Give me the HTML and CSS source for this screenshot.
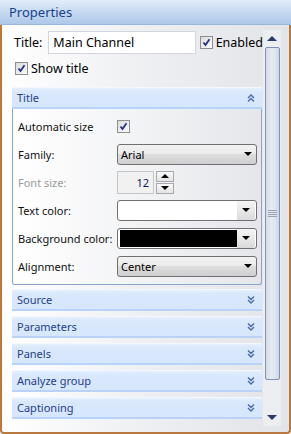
FILE: index.html
```html
<!DOCTYPE html>
<html>
<head>
<meta charset="utf-8">
<link rel="stylesheet" href="styles.css">
</head>
<body>
<div class="window">
  <div class="header">Properties</div>
  <div class="frame">
    <div class="main">
      <div class="row-title">
        <span class="lbl-big">Title:</span>
        <div class="textbox">Main Channel</div>
        <span class="chk checked"><svg viewBox="0 0 9 9" width="9" height="9"><path d="M1.5 4.5 L3.5 7 L7.5 1.2" fill="none" stroke="#23318c" stroke-width="1.8"/></svg></span>
        <span class="lbl-big">Enabled</span>
      </div>
      <div class="row-show">
        <span class="chk checked"><svg viewBox="0 0 9 9" width="9" height="9"><path d="M1.5 4.5 L3.5 7 L7.5 1.2" fill="none" stroke="#23318c" stroke-width="1.8"/></svg></span>
        <span class="lbl-big">Show title</span>
      </div>

      <div class="sect first">
        <span>Title</span>
        <svg class="chev" viewBox="0 0 8 8" width="8" height="8"><path d="M1 4 L4 1 L7 4 M1 7.5 L4 4.5 L7 7.5" fill="none" stroke="#4a6aa5" stroke-width="1.4"/></svg>
      </div>
      <div class="panel">
        <div class="prow">
          <span class="plbl">Automatic size</span>
          <span class="chk checked small"><svg viewBox="0 0 9 9" width="9" height="9"><path d="M1.5 4.5 L3.5 7 L7.5 1.2" fill="none" stroke="#23318c" stroke-width="1.8"/></svg></span>
        </div>
        <div class="prow">
          <span class="plbl">Family:</span>
          <div class="combo"><span class="ctext">Arial</span><span class="arrow"></span></div>
        </div>
        <div class="prow">
          <span class="plbl disabled">Font size:</span>
          <div class="spin">
            <div class="spinval">12</div>
            <div class="spinbtns">
              <div class="sbtn"><span class="tri-up"></span></div>
              <div class="sbtn"><span class="tri-dn"></span></div>
            </div>
          </div>
        </div>
        <div class="prow">
          <span class="plbl">Text color:</span>
          <div class="combo color"><span class="swatch white"></span><span class="cbtn"><span class="arrow"></span></span></div>
        </div>
        <div class="prow">
          <span class="plbl">Background color:</span>
          <div class="combo color"><span class="swatch black"></span><span class="cbtn"><span class="arrow"></span></span></div>
        </div>
        <div class="prow">
          <span class="plbl">Alignment:</span>
          <div class="combo"><span class="ctext">Center</span><span class="arrow"></span></div>
        </div>
      </div>

      <div class="sect gap4">
        <span>Source</span>
        <svg class="chev" viewBox="0 0 8 8" width="8" height="8"><path d="M1 0.5 L4 3.5 L7 0.5 M1 4 L4 7 L7 4" fill="none" stroke="#4a6aa5" stroke-width="1.4"/></svg>
      </div>
      <div class="sect">
        <span>Parameters</span>
        <svg class="chev" viewBox="0 0 8 8" width="8" height="8"><path d="M1 0.5 L4 3.5 L7 0.5 M1 4 L4 7 L7 4" fill="none" stroke="#4a6aa5" stroke-width="1.4"/></svg>
      </div>
      <div class="sect">
        <span>Panels</span>
        <svg class="chev" viewBox="0 0 8 8" width="8" height="8"><path d="M1 0.5 L4 3.5 L7 0.5 M1 4 L4 7 L7 4" fill="none" stroke="#4a6aa5" stroke-width="1.4"/></svg>
      </div>
      <div class="sect">
        <span>Analyze group</span>
        <svg class="chev" viewBox="0 0 8 8" width="8" height="8"><path d="M1 0.5 L4 3.5 L7 0.5 M1 4 L4 7 L7 4" fill="none" stroke="#4a6aa5" stroke-width="1.4"/></svg>
      </div>
      <div class="sect">
        <span>Captioning</span>
        <svg class="chev" viewBox="0 0 8 8" width="8" height="8"><path d="M1 0.5 L4 3.5 L7 0.5 M1 4 L4 7 L7 4" fill="none" stroke="#4a6aa5" stroke-width="1.4"/></svg>
      </div>
    </div>
    <div class="scroll">
      <div class="sarrow"><span class="stri-up"></span></div>
      <div class="thumb"><span class="grip"></span></div>
      <div class="sarrow bottom"><span class="stri-dn"></span></div>
    </div>
  </div>
</div>
</body>
</html>
```

FILE: styles.css
```css
* { box-sizing: border-box; }
html, body { margin: 0; padding: 0; }
body {
  width: 291px;
  height: 434px;
  background: #ffffff;
  font-family: "Noto Sans", "DejaVu Sans", sans-serif;
  overflow: hidden;
}
.window {
  width: 291px;
  height: 434px;
  display: flex;
  flex-direction: column;
}
.header {
  height: 25px;
  flex: none;
  padding-left: 9px;
  line-height: 25px;
  font-size: 13px;
  color: #15428b;
  background: linear-gradient(to bottom, #e3edf9 0%, #c9dbf1 45%, #aec8ea 100%);
  border-bottom: 1px solid #9ab6dc;
}
.frame {
  flex: 1;
  display: flex;
  border-left: 2px solid #b8783f;
  border-right: 2px solid #b8783f;
  border-bottom: 2px solid #b8783f;
  border-radius: 0 0 4px 4px;
  background: linear-gradient(to right, #ffffff 0%, #eeeff2 50%, #e2e4e8 100%);
}
.main {
  width: 261px;
  flex: none;
  display: flex;
  flex-direction: column;
}
.row-title {
  margin-top: 6px;
  height: 23px;
  display: flex;
  align-items: center;
  padding-left: 12px;
}
.lbl-big {
  font-size: 12.5px;
  color: #000;
}
.textbox {
  margin-left: 6px;
  width: 149px;
  height: 23px;
  background: #fff;
  border: 1px solid #d3d6da;
  font-size: 12.5px;
  line-height: 21px;
  padding-left: 4px;
  color: #000;
  margin-right: 4px;
}
.chk {
  width: 13px;
  height: 13px;
  flex: none;
  border: 1px solid #8e8f8f;
  background: linear-gradient(135deg, #dcdcdc, #fbfbfb);
  display: flex;
  align-items: center;
  justify-content: center;
  margin-right: 3px;
}
.chk svg { display: block; }
.row-show {
  margin-top: 8px;
  height: 13px;
  display: flex;
  align-items: center;
  padding-left: 13px;
}
.sect {
  margin-left: 10px;
  width: 250px;
  height: 22px;
  flex: none;
  display: flex;
  align-items: center;
  justify-content: space-between;
  padding-left: 5px;
  padding-right: 7px;
  background: linear-gradient(to bottom, #e6f0fd 0%, #d9e8fc 20%, #d6e6fc 100%);
  border-top: 1px solid #f4f8fe;
  border-bottom: 2px solid #b9d2f5;
  font-size: 11px;
  color: #1f3f86;
  margin-top: 5px;
}
.sect.first { margin-top: 12px; }
.sect.gap4 { margin-top: 4px; }
.chev { display: block; }
.panel {
  margin-left: 10px;
  width: 250px;
  height: 176px;
  flex: none;
  border: 1px solid #8ca4c7;
  border-top: none;
  border-radius: 0 0 3px 3px;
  background: linear-gradient(to right, #ffffff 0%, #f1f2f4 55%, #e4e6ea 100%);
  padding-top: 3px;
}
.prow {
  height: 28px;
  display: flex;
  align-items: center;
  padding-left: 5px;
}
.plbl {
  width: 99px;
  flex: none;
  font-size: 11px;
  color: #111;
}
.plbl.disabled { color: #9b9b9b; }
.chk.small { margin-left: 0; }
.combo {
  width: 140px;
  height: 21px;
  border: 1px solid #707070;
  border-radius: 3px;
  background: linear-gradient(to bottom, #f2f2f2 0%, #ebebeb 45%, #dddddd 50%, #cfcfcf 100%);
  display: flex;
  align-items: center;
  justify-content: space-between;
  padding-left: 3px;
  padding-right: 4px;
}
.ctext { font-size: 11px; color: #000; }
.arrow {
  width: 0; height: 0;
  border-left: 4px solid transparent;
  border-right: 4px solid transparent;
  border-top: 4px solid #000;
}
.combo.color {
  padding: 1px;
  background: #fff;
  border-color: #707070;
}
.swatch {
  flex: 1;
  height: 17px;
  margin-left: 1px;
}
.swatch.white { background: #fff; }
.swatch.black { background: #000; }
.cbtn {
  width: 18px;
  height: 19px;
  display: flex;
  align-items: center;
  justify-content: center;
  background: linear-gradient(to bottom, #f4f4f4 0%, #e9e9e9 50%, #dadada 100%);
  border-radius: 0 2px 2px 0;
}
.spin {
  display: flex;
  align-items: stretch;
  height: 23px;
}
.spinval {
  width: 37px;
  border: 1px solid #c4c6ca;
  background: #f1f1f1;
  font-size: 11px;
  text-align: right;
  padding-right: 4px;
  line-height: 21px;
  color: #102060;
}
.spinbtns {
  width: 18px;
  margin-left: 2px;
  display: flex;
  flex-direction: column;
  gap: 1px;
}
.sbtn {
  flex: 1;
  border: 1px solid #a7a9ad;
  background: linear-gradient(to bottom, #fafafa, #e3e3e3);
  display: flex;
  align-items: center;
  justify-content: center;
}
.tri-up {
  width: 0; height: 0;
  border-left: 4px solid transparent;
  border-right: 4px solid transparent;
  border-bottom: 4px solid #000;
}
.tri-dn {
  width: 0; height: 0;
  border-left: 4px solid transparent;
  border-right: 4px solid transparent;
  border-top: 4px solid #000;
}
.scroll {
  width: 18px;
  flex: none;
  margin-top: 5px;
  margin-bottom: 6px;
  display: flex;
  flex-direction: column;
  background: #eceef1;
}
.sarrow {
  height: 17px;
  flex: none;
  display: flex;
  align-items: center;
  justify-content: center;
}
.stri-up {
  width: 0; height: 0;
  border-left: 5px solid transparent;
  border-right: 5px solid transparent;
  border-bottom: 5px solid #28396a;
}
.stri-dn {
  width: 0; height: 0;
  border-left: 5px solid transparent;
  border-right: 5px solid transparent;
  border-top: 5px solid #28396a;
}
.thumb {
  margin: 0 1px 0 2px;
  height: 333px;
  flex: none;
  border: 1px solid #7f92b8;
  border-radius: 2px;
  background: linear-gradient(to right, #d5dce8 0%, #e6ebf2 40%, #dfe5ee 70%, #cdd5e2 100%);
  display: flex;
  align-items: center;
  justify-content: center;
}
.grip {
  width: 9px;
  height: 7px;
  background: repeating-linear-gradient(to bottom, #9aa4b4 0px, #9aa4b4 1px, transparent 1px, transparent 2px);
}
.sarrow.bottom { margin-top: auto; }
```
